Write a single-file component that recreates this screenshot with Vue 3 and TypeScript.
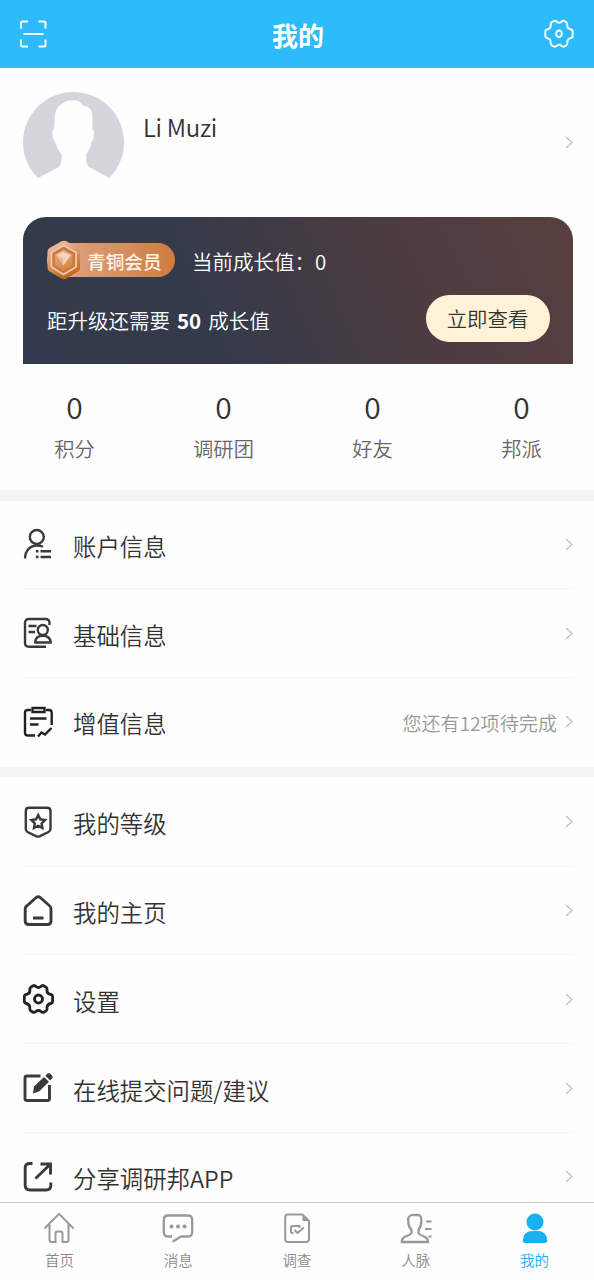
<script setup lang="ts">
interface Row {
  label: string
  icon: string
  note?: string
}

const stats = [
  { value: 0, label: '积分' },
  { value: 0, label: '调研团' },
  { value: 0, label: '好友' },
  { value: 0, label: '邦派' },
]

const groups: Row[][] = [
  [
    { label: '账户信息', icon: 'account' },
    { label: '基础信息', icon: 'basic' },
    { label: '增值信息', icon: 'extra', note: '您还有12项待完成' },
  ],
  [
    { label: '我的等级', icon: 'level' },
    { label: '我的主页', icon: 'homepage' },
    { label: '设置', icon: 'settings' },
    { label: '在线提交问题/建议', icon: 'edit' },
    { label: '分享调研邦APP', icon: 'share' },
  ],
]

const tabs = [
  { label: '首页', icon: 'home', active: false },
  { label: '消息', icon: 'chat', active: false },
  { label: '调查', icon: 'survey', active: false },
  { label: '人脉', icon: 'people', active: false },
  { label: '我的', icon: 'me', active: true },
]

const gear =
  'M10.2 2.2 Q12 1.2 13.4 2.8 Q16 5 18.6 2.8 Q20 1.2 21.8 2.2 L23.8 3.4 Q25.2 4.4 24.8 6.4 Q24.6 9.8 28 10.6 Q30.6 11 30.6 13 V17.6 Q30.6 19.4 28.4 19.8 Q24.6 20.8 24.9 24.2 Q25.2 26.2 23.8 27.2 L21.8 28.4 Q20 29.2 18.6 27.8 Q16 25.6 13.4 27.8 Q12 29.2 10.2 28.4 L8.2 27.2 Q6.8 26.2 7.1 24.2 Q7.4 20.8 3.6 19.8 Q1.4 19.4 1.4 17.6 V13 Q1.4 11 4 10.6 Q7.4 9.8 7.2 6.4 Q6.8 4.4 8.2 3.4 Z'
</script>

<template>
  <div class="page">
    <header class="topbar">
      <svg class="scan" width="28" height="30" viewBox="0 0 28 30">
        <path d="M9 2.500H3.500Q2 2.500 2 4V9.500M19.500 2.500H25Q26.500 2.500 26.500 4V9.500M2 20.500V26Q2 27.500 3.500 27.500H9M19.500 27.500H25Q26.500 27.500 26.500 26V20.500M4.500 15H24.500" />
      </svg>
      <h1>我的</h1>
      <svg class="gear-top" width="30" height="30" viewBox="0 0 32 31" preserveAspectRatio="none">
        <path :d="gear" />
        <ellipse cx="16" cy="15.3" rx="3" ry="3.500" />
      </svg>
    </header>

    <section class="profile">
      <svg class="avatar" width="101" height="88" viewBox="0 0 101 88">
        <path
          d="M15 86 C5 76 0 64 0 50.500 A50.500 50.500 0 0 1 101 50.500 C101 64 96 76 86 86 L67 75.500 Q63.500 73 63.300 69 V62 C66 58.500 67.500 55 68.300 51 Q71 47 71 42 Q71 38 69.300 37 L69.500 25 Q69.500 14.500 60 13.500 Q57 8.300 50.500 8.300 C39 8.300 32 15.500 31.700 26 L31 37 Q29 38 29.300 42 Q30 48 32.300 50.500 C33.500 55 35.500 59 38.500 62 V69 Q38 73 35 75.500 Z"
        />
      </svg>
      <div class="name">Li Muzi</div>
      <svg class="chevron" width="9" height="13" viewBox="0 0 9 13"><path d="M1 1.200L7 6.500L1 11.800" /></svg>
    </section>

    <section class="member">
      <div class="member-line">
        <div class="badge">
          <svg class="gem" width="34" height="40" viewBox="0 0 34 40">
            <defs>
              <linearGradient id="gemOuter" x1="0" y1="0" x2="0.4" y2="1">
                <stop offset="0" stop-color="#eec9b4" />
                <stop offset="0.5" stop-color="#dc9c70" />
                <stop offset="1" stop-color="#c06a1e" />
              </linearGradient>
              <linearGradient id="gemFace" x1="0" y1="0" x2="0.3" y2="1">
                <stop offset="0" stop-color="#e6ab8c" />
                <stop offset="1" stop-color="#d98948" />
              </linearGradient>
            </defs>
            <path d="M14.500 1.300Q17 0 19.500 1.300L31 8Q33 9.300 33 11.500V28Q33 30.300 31 31.500L19.500 38.500Q17 40 14.500 38.500L2.500 31.500Q.5 30.300 .5 28V11.500Q.5 9.300 2.500 8Z" fill="url(#gemOuter)" />
            <path d="M16.500 5.500L29 12.500V27L16.500 34.500L4.500 27V12.500Z" fill="#c9793c" stroke="#f0c8ab" stroke-width="1.800" />
            <path d="M16.500 9.500L25.500 14.500V25L16.500 30.500L8 25V14.500Z" fill="url(#gemFace)" />
            <path d="M9.500 15L16 11.500L24 15L16.500 25.500Z" fill="#f5d3c0" />
            <path d="M9.500 15L16 18L16.500 25.500Z" fill="#ecb698" />
          </svg>
          <span>青铜会员</span>
        </div>
        <span class="growth">当前成长值：0</span>
      </div>
      <div class="member-line lower">
        <div class="need">距升级还需要<b>50</b>成长值</div>
        <button type="button">立即查看</button>
      </div>
    </section>

    <section class="stats">
      <div v-for="s in stats" :key="s.label" class="stat">
        <strong>{{ s.value }}</strong>
        <span>{{ s.label }}</span>
      </div>
    </section>

    <section v-for="(group, gi) in groups" :key="gi" class="group">
      <div v-for="row in group" :key="row.label" class="row">
        <svg class="row-icon" width="32" height="32" viewBox="0 0 32 32">
          <g v-if="row.icon === 'account'">
            <circle cx="13.800" cy="9" r="7" />
            <path d="M2 30.500C2.300 22 7.500 17.500 14 17.500Q17.500 17.500 20 18.800M17.500 23.200H28M17.500 29H28M12.800 23.200H15.500M12.800 29H15.500" />
          </g>
          <g v-else-if="row.icon === 'basic'">
            <path d="M26.500 8V6Q26.500 2 22.500 2H6Q2 2 2 6V26Q2 29.700 6 29.700H23M5.500 9H13.500M5.500 15H12" />
            <circle cx="19.800" cy="13" r="5" />
            <path d="M12.200 25.500Q12.500 18.800 19.800 18.800T27.800 25.500Z" stroke-linejoin="round" />
          </g>
          <g v-else-if="row.icon === 'extra'" class="dark">
            <path d="M8 4H5Q2 4 2 7V27Q2 29.500 5 29.500H12M23 4H26Q28.700 4 28.700 7V19" />
            <path d="M9.500 2H21.500V6H9.500ZM7 12.500H23.500M7 18.500H15.500M15 30.500L18.500 26.500L22 28.500L28.500 22" />
          </g>
          <g v-else-if="row.icon === 'level'">
            <path d="M6 1.800H24Q27.500 1.800 27.500 5V23Q27.500 25 25.500 26L16.500 30.300Q15 31 13.500 30.300L4.500 26Q2.800 25 2.800 23V5Q2.800 1.800 6 1.800Z" />
            <path d="M15.200 9L17.300 13.300L22 14L18.600 17.300L19.400 22L15.200 19.800L11 22L11.800 17.300L8.400 14L13.100 13.300Z" />
          </g>
          <g v-else-if="row.icon === 'homepage'" class="heavy">
            <path d="M13.200 2.500Q15.200 1 17.200 2.500L26.800 11Q28 12 28 14V26Q28 29.500 24.200 29.500H6Q2.200 29.500 2.200 26V14Q2.200 12 3.600 11ZM10 23H20.500" />
          </g>
          <g v-else-if="row.icon === 'settings'" class="heavy dark">
            <path :d="gear" transform="translate(-.1 .7) scale(.97 1)" />
            <circle cx="15.500" cy="16" r="4" />
          </g>
          <g v-else-if="row.icon === 'edit'" class="heavy">
            <path d="M17.500 4H4Q2 4 2 6V26.500Q2 28.500 4 28.500H24.500Q26.500 28.500 26.500 26.500V13" />
            <path class="solid" d="M10 21.500L11 14.500L21 5L26 9.800L16 19.500ZM22.300 3.800L24.500 1.500Q25.800 .5 27 1.500L29.300 3.800Q30.300 5 29.300 6.200L27.200 8.500Z" />
          </g>
          <g v-else class="heavy">
            <path d="M9.500 2.500H7Q2.200 2.500 2.200 7V24.500Q2.200 29 7 29H23Q27.800 29 27.800 24.500V21.500M17.500 3H27.500V13.500M27 3.500L12.500 17.500" />
          </g>
        </svg>
        <span class="row-label">{{ row.label }}</span>
        <span v-if="row.note" class="note">{{ row.note }}</span>
        <svg class="chevron" width="9" height="13" viewBox="0 0 9 13"><path d="M1 1.200L7 6.500L1 11.800" /></svg>
      </div>
    </section>

    <nav class="tabbar">
      <div v-for="t in tabs" :key="t.label" class="tab" :class="{ active: t.active }">
        <svg width="32" height="32" viewBox="0 0 32 32">
          <g v-if="t.icon === 'home'">
            <path d="M1.500 16.500L16 1.800L30.500 16.500M6.500 12.500V28Q6.500 30 8.500 30H12.500V21.500Q12.500 19.500 14.500 19.500H17.500Q19.500 19.500 19.500 21.500V30H23.500Q25.500 30 25.500 28V12.500" />
          </g>
          <g v-else-if="t.icon === 'chat'">
            <path d="M10 24.500H6Q1.800 24.500 1.800 20V8Q1.800 3.500 6 3.500H26Q30.200 3.500 30.200 8V20Q30.200 24.500 26 24.500H19L10.500 29.800" stroke-width="2.300" />
            <path d="M9.500 14.500H9.510M16 14.500H16.010M22.500 14.500H22.510" class="dots" />
          </g>
          <g v-else-if="t.icon === 'survey'">
            <path d="M7 2.500H21.500L28 9V27Q28 30 25 30H7Q4.200 30 4.200 27V5.500Q4.200 2.500 7 2.500Z" />
            <path d="M21.500 2.500V9H28Z" class="fill" />
            <path d="M12.500 21H11.500Q10 21 10 19.500V15.500Q10 14 11.500 14H18.500V16M13.500 18L16.500 21L23 15.500" />
          </g>
          <g v-else-if="t.icon === 'people'">
            <path d="M8.300 9Q7.500 4 12 3H18Q22 3.500 21.300 9Q21.500 14 18.500 18V21Q19 22.500 24 24.500Q28 26 28 30H1.800Q1.800 26 5.500 24.500Q11 22.500 11.500 21V18Q8 14 8.300 9Z" stroke-width="2.300" />
            <path d="M26 9.500H31.500M25 17H31.500M28.500 24.500H31.500" />
          </g>
          <g v-else class="fill">
            <circle cx="16" cy="10" r="8.500" />
            <path d="M3.800 28.500Q3.800 19 14 19H18Q28.200 19 28.200 28.500Q28.200 31 25.700 31H6.300Q3.800 31 3.800 28.500Z" />
          </g>
        </svg>
        <span>{{ t.label }}</span>
      </div>
    </nav>
  </div>
</template>

<style>
body {
  margin: 0;
}
</style>

<style scoped>
.page {
  position: relative;
  width: 594px;
  height: 1280px;
  overflow: hidden;
  background: #fefefe;
  color: #333;
  font-family: 'Noto Sans CJK SC', sans-serif;
  font-weight: 350;
}
svg {
  display: block;
  flex: none;
  fill: none;
}
.topbar {
  height: 68px;
  box-sizing: border-box;
  padding: 0 20px 0 19px;
  display: flex;
  align-items: center;
  justify-content: space-between;
  background: #2dbbfb;
  color: #fff;
}
.topbar path,
.topbar ellipse {
  stroke: #fff;
  stroke-width: 2;
}
h1 {
  margin: 2px 0 0 5px;
  font-size: 26px;
  line-height: 36px;
  font-weight: 700;
}
.profile {
  height: 149px;
  box-sizing: border-box;
  padding: 24px 20px 0 23px;
  display: flex;
  align-items: flex-start;
}
.avatar {
  fill: #d3d7dc;
}
.name {
  flex: 1;
  margin: 17px 0 0 19px;
  font-size: 24px;
  line-height: 36px;
  letter-spacing: -0.3px;
}
.chevron {
  stroke: #c8c8c8;
  stroke-width: 1.6;
}
.profile .chevron {
  margin-top: 44px;
}
.member {
  width: 550px;
  height: 146.500px;
  margin-left: 23px;
  box-sizing: border-box;
  padding: 23px 23px 0 24px;
  border-radius: 23px 23px 0 0;
  background: linear-gradient(66deg, #323a4b 0%, #353a4a 34%, #483c42 62%, #593f3e 100%);
  color: #fff;
}
.member-line {
  display: flex;
  align-items: center;
  height: 40px;
  font-size: 20.500px;
}
.member-line.lower {
  height: 47px;
  margin-top: 15px;
  justify-content: space-between;
}
.badge {
  display: flex;
  align-items: center;
  width: 128px;
  height: 34px;
  border-radius: 17px;
  background: linear-gradient(90deg, #dfa98c, #cf7c3c);
}
.badge span {
  margin: 0 0 0 6px;
  font-size: 18.700px;
  font-weight: 500;
  color: #fff3e8;
  white-space: nowrap;
}
.growth {
  margin: 1px 0 0 17px;
}
.need {
  margin-top: 2px;
}
.need b {
  margin: 0 7px 0 7px;
}
button {
  width: 124px;
  height: 47px;
  padding: 0 1px 2px 0;
  border: 0;
  border-radius: 24px;
  background: #fff2d8;
  color: #333;
  font: 350 20.400px 'Noto Sans CJK SC', sans-serif;
}
.stats {
  height: 126px;
  display: grid;
  grid-template-columns: repeat(4, 149px);
  align-content: start;
  padding-top: 20px;
  box-sizing: border-box;
}
.stat {
  display: flex;
  flex-direction: column;
  align-items: center;
}
.stat strong {
  font-size: 30px;
  line-height: 44px;
  font-weight: 350;
}
.stat span {
  margin-top: 2px;
  font-size: 20.300px;
  line-height: 37px;
  color: #666;
}
.group {
  padding: 0 20px 0 23px;
  border-top: 11px solid #f4f4f4;
}
.group + .group {
  padding-top: 1px;
  border-top-width: 10px;
}
.row {
  display: flex;
  align-items: center;
  height: 88.800px;
  box-sizing: border-box;
  border-bottom: 1px solid #f6f6f6;
}
.row:last-child {
  border-bottom-color: transparent;
}
.row-icon {
  stroke: #3a3a3a;
  stroke-width: 2.4;
}
.heavy {
  stroke-width: 2.9;
}
.dark {
  stroke: #222;
}
.solid {
  fill: #3a3a3a;
  stroke: none;
}
.row-label {
  flex: 1;
  margin: 3px 0 0 18px;
  font-size: 23.400px;
  line-height: 34px;
}
.note {
  margin: 3px 8px 0 0;
  font-size: 19.100px;
  color: #999;
}
.tabbar {
  position: absolute;
  left: 0;
  right: 0;
  bottom: 0;
  height: 78px;
  box-sizing: border-box;
  padding-top: 9px;
  border-top: 1px solid #c4c4c4;
  background: #fefefe;
  display: grid;
  grid-template-columns: repeat(5, 1fr);
}
.tab {
  display: flex;
  flex-direction: column;
  align-items: center;
  font-size: 14.500px;
  line-height: 22px;
  color: #8c8c8c;
}
.tab svg {
  stroke: #999;
  stroke-width: 2;
  margin-bottom: 5px;
}
.tab .dots {
  stroke-width: 4;
  stroke-linecap: round;
}
.tab .fill {
  fill: #999;
  stroke: none;
}
.tab.active {
  color: #18b0ef;
}
.tab.active .fill {
  fill: #18b0ef;
}
</style>
